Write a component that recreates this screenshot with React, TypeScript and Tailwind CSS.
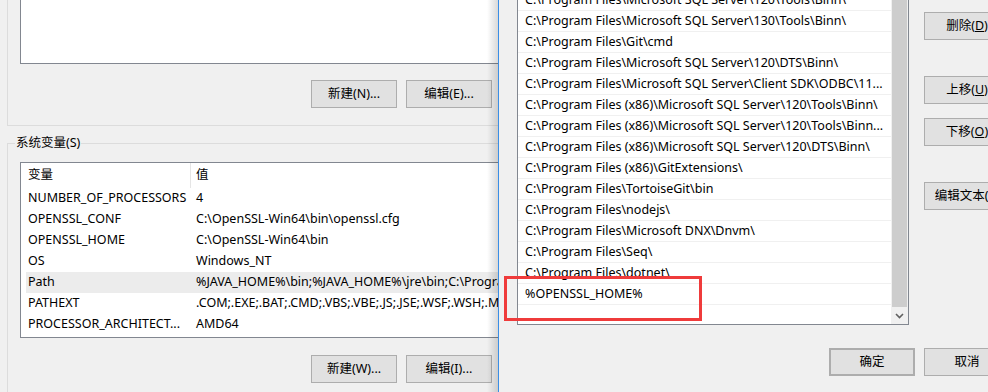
import { ReactNode } from "react";

const font = "font-['Noto_Sans','Noto_Sans_CJK_SC',sans-serif]";

interface BtnProps {
    children: ReactNode;
    className?: string;
}

function Btn({ children, className = "" }: BtnProps) {
    return (
        <button
            className={`flex h-[28px] w-[86px] shrink-0 items-center justify-center whitespace-nowrap border border-[#adadad] bg-[#e1e1e1] text-[12.5px] leading-none text-black ${className}`}
        >
            {children}
        </button>
    );
}

const systemVars = [
    ["NUMBER_OF_PROCESSORS", "4"],
    ["OPENSSL_CONF", "C:\\OpenSSL-Win64\\bin\\openssl.cfg"],
    ["OPENSSL_HOME", "C:\\OpenSSL-Win64\\bin"],
    ["OS", "Windows_NT"],
    ["Path", "%JAVA_HOME%\\bin;%JAVA_HOME%\\jre\\bin;C:\\Program Files\\Microsoft SQL Server"],
    ["PATHEXT", ".COM;.EXE;.BAT;.CMD;.VBS;.VBE;.JS;.JSE;.WSF;.WSH;.MSC"],
    ["PROCESSOR_ARCHITECT...", "AMD64"],
];

const pathEntries = [
    "C:\\Program Files\\Microsoft SQL Server\\120\\Tools\\Binn\\",
    "C:\\Program Files\\Microsoft SQL Server\\130\\Tools\\Binn\\",
    "C:\\Program Files\\Git\\cmd",
    "C:\\Program Files\\Microsoft SQL Server\\120\\DTS\\Binn\\",
    "C:\\Program Files\\Microsoft SQL Server\\Client SDK\\ODBC\\11...",
    "C:\\Program Files (x86)\\Microsoft SQL Server\\120\\Tools\\Binn\\",
    "C:\\Program Files (x86)\\Microsoft SQL Server\\120\\Tools\\Binn...",
    "C:\\Program Files (x86)\\Microsoft SQL Server\\120\\DTS\\Binn\\",
    "C:\\Program Files (x86)\\GitExtensions\\",
    "C:\\Program Files\\TortoiseGit\\bin",
    "C:\\Program Files\\nodejs\\",
    "C:\\Program Files\\Microsoft DNX\\Dnvm\\",
    "C:\\Program Files\\Seq\\",
    "C:\\Program Files\\dotnet\\",
    "%OPENSSL_HOME%",
    "",
];

export default function App() {
    return (
        <div className={`flex h-[392px] w-[988px] overflow-hidden bg-[#f0f0f0] text-[12.5px] text-black ${font}`}>
            {/* environment variables dialog (behind) */}
            <div className="relative w-[498px] shrink-0 overflow-hidden">
                <div className="ml-[7px] h-[126px] w-[600px] border-b border-l border-[#dcdcdc]">
                    <div className="ml-[12px] h-[64px] w-[600px] border-b border-l border-[#828790] bg-white" />
                    <div className="mt-[16px] flex gap-[9px] pl-[303px]">
                        <Btn>新建(N)...</Btn>
                        <Btn>编辑(E)...</Btn>
                    </div>
                </div>

                <fieldset className="ml-[7px] mt-[9px] w-[600px] border-l border-t border-[#dcdcdc] pb-[20px]">
                    <legend className="ml-[7px] px-[1px] leading-[16px]">系统变量(S)</legend>
                    <div className="ml-[12px] mt-[11px] h-[176px] w-[600px] border border-[#828790] bg-white">
                        <div className="flex h-[25px] items-center">
                            <div className="w-[169px] pl-[7px]">变量</div>
                            <div className="h-full w-px bg-[#e5e5e5]" />
                            <div className="pl-[5px]">值</div>
                        </div>
                        {systemVars.map(([name, value]) => (
                            <div
                                key={name}
                                className={`ml-[5px] flex h-[21px] items-center whitespace-nowrap ${
                                    name === "Path" ? "bg-[#ececec]" : ""
                                }`}
                            >
                                <div className="w-[168px] shrink-0 overflow-hidden pl-[2px]">{name}</div>
                                <div className="pl-[2px]">{value}</div>
                            </div>
                        ))}
                    </div>
                    <div className="mt-[17px] flex gap-[9px] pl-[303px]">
                        <Btn>新建(W)...</Btn>
                        <Btn>编辑(I)...</Btn>
                    </div>
                </fieldset>

                <div className="absolute inset-y-0 right-0 w-[11px] bg-linear-to-r from-transparent to-black/15" />
            </div>

            <div className="w-px shrink-0 bg-[#3a8ee6]" />

            {/* edit path dialog (front) */}
            <div className="relative w-[520px] shrink-0">
                <div className="flex">
                    <div className="ml-[18px] flex h-[325px] w-[392px] overflow-hidden border-x border-b border-[#828790] bg-white">
                        <div className="-mt-[10px] w-[373px]">
                            {pathEntries.map((p, i) => (
                                <div
                                    key={i}
                                    className="flex h-[21px] items-center whitespace-nowrap border-b border-[#f0f0f0] pl-[7px]"
                                >
                                    {p}
                                </div>
                            ))}
                        </div>
                        <div className="flex w-[17px] flex-col bg-[#f0f0f0]">
                            <div className="mx-[1px] flex-1 bg-[#cdcdcd]" />
                            <div className="flex h-[17px] items-center justify-center">
                                <svg width="9" height="6" viewBox="0 0 9 6">
                                    <path d="M1 1l3.5 3.5L8 1" fill="none" stroke="#606060" strokeWidth="1.6" />
                                </svg>
                            </div>
                        </div>
                    </div>
                    <div className="ml-[15px] flex flex-col pt-[12px]">
                        <Btn>
                            删除(<u>D</u>)
                        </Btn>
                        <Btn className="mt-[36px]">
                            上移(<u>U</u>)
                        </Btn>
                        <Btn className="mt-[14px]">
                            下移(<u>O</u>)
                        </Btn>
                        <Btn className="mt-[36px]">
                            编辑文本(<u>T</u>)
                        </Btn>
                    </div>
                </div>
                <div className="mt-[23px] flex gap-[9px] pl-[330px]">
                    <Btn className="border-2 border-[#0078d7]">确定</Btn>
                    <Btn>取消</Btn>
                </div>

                <div className="absolute left-[5px] top-[276px] h-[45px] w-[198px] border-[3px] border-[#ef3b3b]" />
            </div>
        </div>
    );
}
